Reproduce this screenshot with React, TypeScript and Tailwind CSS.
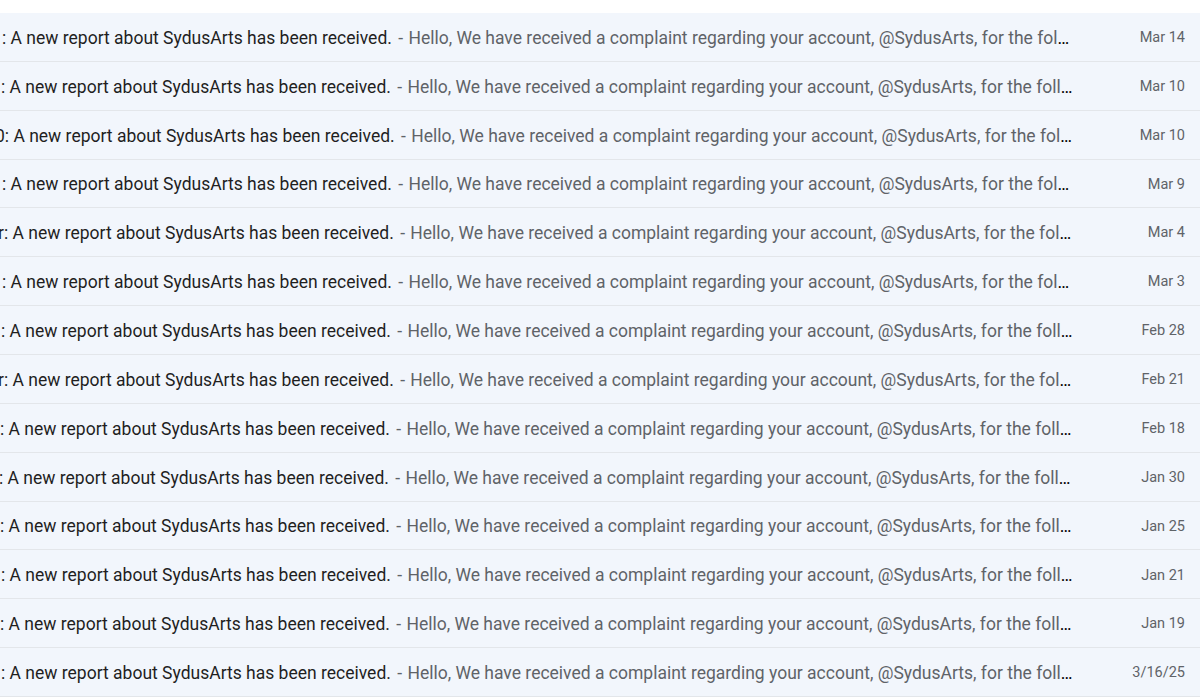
import React from "react";

type Row = { lead: string; shift: string; date: string };

const rows: Row[] = [
  { lead: ":", shift: "ml-[2px]", date: "Mar 14" },
  { lead: ":", shift: "ml-[1px]", date: "Mar 10" },
  { lead: "0:", shift: "-ml-[5px]", date: "Mar 10" },
  { lead: ":", shift: "ml-[2px]", date: "Mar 9" },
  { lead: "r:", shift: "-ml-[2px]", date: "Mar 4" },
  { lead: ":", shift: "ml-[2px]", date: "Mar 3" },
  { lead: ":", shift: "ml-[1px]", date: "Feb 28" },
  { lead: "r:", shift: "-ml-[2px]", date: "Feb 21" },
  { lead: ":", shift: "ml-[0px]", date: "Feb 18" },
  { lead: ":", shift: "-ml-[1px]", date: "Jan 30" },
  { lead: ":", shift: "ml-[0px]", date: "Jan 25" },
  { lead: ":", shift: "ml-[1px]", date: "Jan 21" },
  { lead: ":", shift: "ml-[0px]", date: "Jan 19" },
  { lead: ":", shift: "ml-[1px]", date: "3/16/25" },
];

const subject = "A new report about SydusArts has been received.";
const snippet =
  "Hello, We have received a complaint regarding your account, @SydusArts, for the following reason";

export default function App() {
  return (
    <div
      className="w-[1200px] h-[697px] overflow-hidden bg-white pt-[13px]"
      style={{ fontFamily: "Roboto, 'Liberation Sans', sans-serif" }}
    >
      {rows.map((r, i) => (
        <div
          key={i}
          className="flex items-center h-[48.86px] bg-[#f2f6fc] border-b border-[#e3e6ea]"
        >
          <div className="flex-1 min-w-0 overflow-hidden pr-[55px] pt-[2px]">
            <div className={`truncate text-[17.5px] ${r.shift}`}>
              <span className="text-[#1f1f1f]">
                {r.lead} {subject}
              </span>
              <span className="text-[#5f6368]">
                <span className="ml-[2px]"> -</span>
                <span className="ml-[1px]"> {snippet}</span>
              </span>
            </div>
          </div>
          <div className="w-[72px] shrink-0 pr-[15px] pt-[2px] text-right whitespace-nowrap text-[14.5px] text-[#5f6368]">
            {r.date}
          </div>
        </div>
      ))}
    </div>
  );
}
